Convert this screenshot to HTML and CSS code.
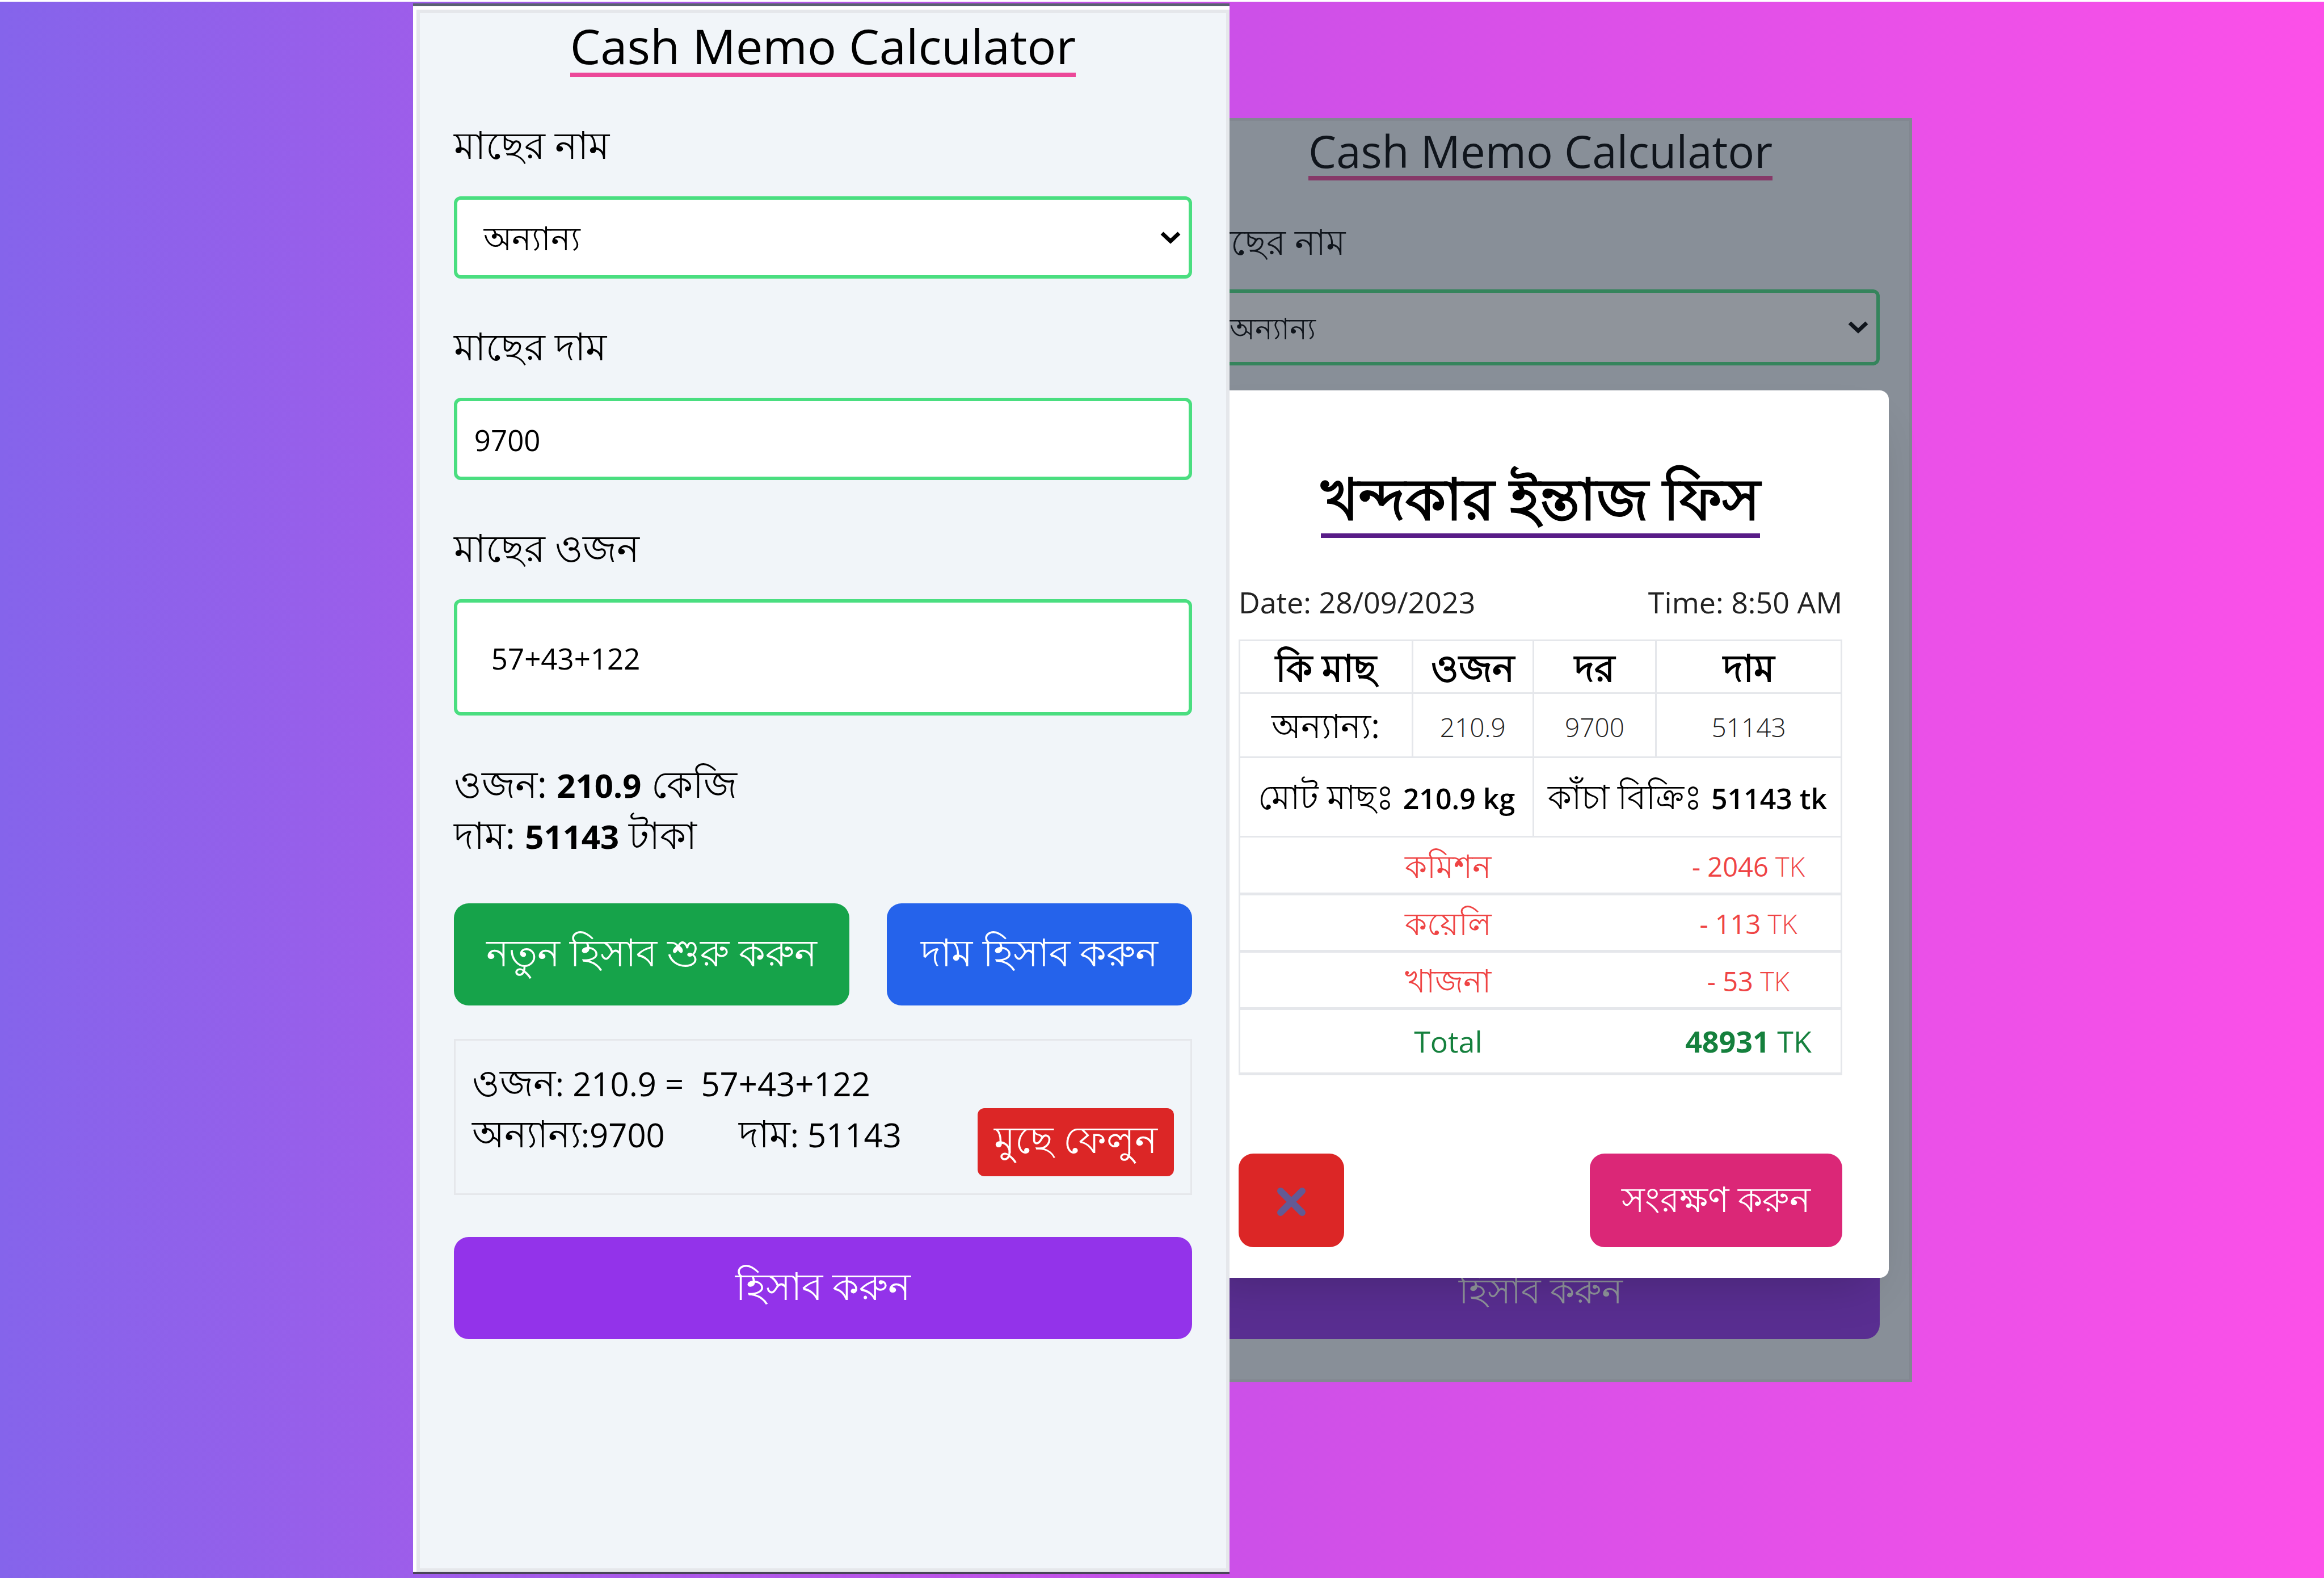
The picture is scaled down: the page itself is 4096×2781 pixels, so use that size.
FILE: index.html
```html
<!DOCTYPE html>
<html lang="bn">
<head>
  <meta charset="utf-8">
  <meta name="viewport" content="width=device-width, initial-scale=1">
  <title>Cash Memo Calculator</title>
  <link rel="stylesheet" href="styles.css">
</head>
<body>
  <main class="showcase">
    <section class="phone-front">
      <form class="memo">
        <h1 class="memo-title">Cash Memo Calculator</h1>

        <div class="field">
          <label for="fish">মাছের নাম</label>
          <div class="select-wrap">
            <select class="control" id="fish"><option>অন্যান্য</option></select>
            <svg class="chevron" viewBox="0 0 36 24" aria-hidden="true"><path d="M3 4l15 14L33 4"/></svg>
          </div>
        </div>

        <div class="field">
          <label for="price">মাছের দাম</label>
          <input class="control" id="price" type="text" value="9700">
        </div>

        <div class="field">
          <label for="weights">মাছের ওজন</label>
          <input class="control control-tall" id="weights" type="text" value="57+43+122">
        </div>

        <div class="summary">
          <p>ওজন: <strong>210.9</strong> কেজি</p>
          <p>দাম: <strong>51143</strong> টাকা</p>
        </div>

        <div class="actions">
          <button class="btn btn-green" type="button">নতুন হিসাব শুরু করুন</button>
          <button class="btn btn-blue" type="button">দাম হিসাব করুন</button>
        </div>

        <div class="entry">
          <div class="entry-text">
            <p>ওজন<span class="num">: 210.9 = &nbsp;57+43+122</span></p>
            <p class="entry-row"><span>অন্যান্য<span class="num">:9700</span></span><span>দাম<span class="num">: 51143</span></span></p>
          </div>
          <button class="btn btn-delete" type="button">মুছে ফেলুন</button>
        </div>

        <button class="btn btn-purple" type="button">হিসাব করুন</button>
      </form>
    </section>

    <section class="phone-back">
      <form class="memo-back">
        <h2 class="memo-title">Cash Memo Calculator</h2>
        <div class="field">
          <label for="fish-back">মাছের নাম</label>
          <div class="select-wrap">
            <select class="control" id="fish-back"><option>অন্যান্য</option></select>
            <svg class="chevron" viewBox="0 0 36 24" aria-hidden="true"><path d="M3 4l15 14L33 4"/></svg>
          </div>
        </div>
        <button class="btn btn-purple" type="button">হিসাব করুন</button>
      </form>

      <div class="overlay">
        <div class="modal" role="dialog" aria-labelledby="shop">
          <h2 class="shop" id="shop">খন্দকার ইন্তাজ ফিস</h2>
          <div class="stamp"><span>Date: 28/09/2023</span><span>Time: 8:50 AM</span></div>
          <table class="bill">
            <colgroup><col class="c-fish"><col class="c-weight"><col class="c-rate"><col class="c-price"></colgroup>
            <thead>
              <tr class="r-head"><th>কি মাছ</th><th>ওজন</th><th>দর</th><th>দাম</th></tr>
            </thead>
            <tbody>
              <tr class="r-item"><td>অন্যান্য:</td><td><span class="light">210.9</span></td><td><span class="light">9700</span></td><td><span class="light">51143</span></td></tr>
              <tr class="r-sum"><td colspan="2">মোট মাছঃ <b>210.9 kg</b></td><td colspan="2">কাঁচা বিক্রিঃ <b>51143 tk</b></td></tr>
              <tr class="r-cut"><td colspan="3">কমিশন</td><td><span class="amount">- 2046 <span class="unit">TK</span></span></td></tr>
              <tr class="r-cut"><td colspan="3">কয়েলি</td><td><span class="amount">- 113 <span class="unit">TK</span></span></td></tr>
              <tr class="r-cut"><td colspan="3">খাজনা</td><td><span class="amount">- 53 <span class="unit">TK</span></span></td></tr>
              <tr class="r-total"><td colspan="3">Total</td><td><b>48931</b> TK</td></tr>
            </tbody>
          </table>
          <div class="modal-actions">
            <button class="btn btn-close" type="button" aria-label="Close">
              <svg viewBox="0 0 50 50" aria-hidden="true"><path d="M6 6l38 38M44 6L6 44"/></svg>
            </button>
            <button class="btn btn-save" type="button">সংরক্ষণ করুন</button>
          </div>
        </div>
      </div>
    </section>
  </main>
</body>
</html>
```
FILE: styles.css
```css
* {
  box-sizing: border-box;
  margin: 0;
  padding: 0;
}

body {
  padding-top: 3px;
  background: #fff;
  color: #000;
  font-family: "Open Sans", "Noto Sans", sans-serif;
}

button,
input,
select {
  font-family: inherit;
  color: inherit;
}

.showcase {
  display: flex;
  min-height: calc(100vh - 3px);
  padding: 3px 0 7px 17.77%;
  background: linear-gradient(to right, #8564eb, #cc50e8 53%, #fc50e8);
}

/* Front phone */
.phone-front {
  position: relative;
  z-index: 2;
  flex: none;
  width: 42.73%;
  padding: 6px 0 0 6px;
  border-top: 5px solid #596270;
  border-bottom: 4px solid #4a4458;
  background: #fff;
}

.memo {
  display: flex;
  flex-direction: column;
  height: 100%;
  padding: 9px 60px;
  border: 6px solid #e5e7eb;
  background: #f1f5f9;
}

.memo-title {
  align-self: center;
  border-bottom: 8px solid #ec4899;
  font-size: 85px;
  line-height: 96px;
  font-weight: 400;
}

.field {
  display: flex;
  flex-direction: column;
  gap: 42px;
  margin-top: 68px;
}

.field label {
  font-size: 67px;
  line-height: 100px;
}

.select-wrap {
  position: relative;
}

.control {
  display: block;
  width: 100%;
  height: 145px;
  padding: 3px 30px 0;
  border: 6px solid #4ade80;
  border-radius: 12px;
  background: #fff;
  font-size: 51px;
}

select.control {
  padding: 0 46px;
  appearance: none;
  font-size: 58px;
}

.control-tall {
  height: 205px;
  padding: 3px 60px 0;
}

.chevron {
  position: absolute;
  top: 50%;
  right: 20px;
  width: 36px;
  height: 24px;
  margin-top: -12px;
  fill: none;
  stroke: #000;
  stroke-width: 7;
}

.summary {
  margin-top: 74px;
  font-size: 66px;
  line-height: 90px;
}

.summary strong {
  font-size: 58px;
  line-height: 1;
  font-weight: 700;
}

.actions {
  display: flex;
  justify-content: space-between;
  margin-top: 77px;
}

.btn {
  height: 180px;
  padding: 5px 57px 0;
  border: 0;
  border-radius: 26px;
  color: #fff;
  font-size: 67px;
}

.btn-green { background: #16a34a; }
.btn-purple { background: #9333ea; }

.btn-blue {
  padding-left: 60px;
  padding-right: 60px;
  background: #2563eb;
}

.entry {
  display: flex;
  justify-content: space-between;
  align-items: flex-end;
  margin-top: 59px;
  padding: 27px 29px 30px;
  border: 3px solid #e5e7eb;
}

.entry-text {
  padding-bottom: 32px;
  font-size: 66px;
  line-height: 90px;
}

.entry-row {
  display: flex;
  gap: 130px;
}

.num {
  font-size: 58px;
  line-height: 1;
}

.btn-delete {
  height: 120px;
  padding: 0 29px;
  border-radius: 12px;
  background: #dc2626;
}

.memo > .btn-purple {
  margin-top: 74px;
}

/* Back phone, dimmed behind the memo dialog */
.phone-back {
  position: relative;
  flex: none;
  width: 38.9%;
  margin: 202px 0 338px -3.18%;
}

.memo-back {
  display: flex;
  flex-direction: column;
  height: 100%;
  padding: 9px 52px 71px;
  border: 5px solid #e5e7eb;
  background: #f1f5f9;
}

.memo-back .memo-title {
  font-size: 78px;
  line-height: 88px;
}

.memo-back .field {
  gap: 39px;
  margin-top: 61px;
}

.memo-back label {
  font-size: 62px;
  line-height: 92px;
}

.memo-back .control {
  height: 134px;
  padding-left: 44px;
  font-size: 52px;
}

.memo-back .btn-purple {
  height: 166px;
  margin-top: auto;
  font-size: 62px;
}

.overlay {
  position: absolute;
  inset: 0;
  display: flex;
  align-items: flex-end;
  padding: 0 41px 184px;
  background: rgba(31, 41, 55, 0.5);
}

.modal {
  display: flex;
  flex-direction: column;
  width: 100%;
  padding: 125px 82px 54px;
  border-radius: 16px;
  background: #fff;
  box-shadow: 0 40px 80px -32px rgba(0, 0, 0, 0.2);
}

.shop {
  align-self: center;
  border-bottom: 8px solid #581c87;
  font-size: 102px;
  line-height: 127px;
  font-weight: 700;
}

.stamp {
  display: flex;
  justify-content: space-between;
  margin: 78px 0 31px;
  color: #222;
  font-size: 52px;
  line-height: 70px;
}

.bill {
  width: 100%;
  border-collapse: collapse;
  table-layout: fixed;
  text-align: center;
}

.c-fish { width: 28.7%; }
.c-weight { width: 20.1%; }
.c-rate { width: 20.4%; }
.c-price { width: 30.8%; }

.bill th,
.bill td {
  border: 3px solid #e5e7eb;
  font-size: 60px;
  line-height: 80px;
  white-space: nowrap;
}

.bill .r-head th {
  height: 93px;
  font-size: 66px;
  font-weight: 700;
}

.r-item { height: 113px; }
.r-sum { height: 140px; }
.r-cut { height: 101px; }
.r-total { height: 115px; }

.light {
  color: #222;
  font-size: 46px;
  font-weight: 300;
}

.r-sum b {
  font-size: 50px;
  font-weight: 600;
}

.bill .r-cut td {
  border-width: 0 3px 5px;
  color: #ef4444;
  font-size: 56px;
}

.bill .r-cut td:first-child,
.bill .r-total td:first-child {
  border-right: 0;
}

.bill .r-cut td:last-child,
.bill .r-total td:last-child {
  border-left: 0;
}

.amount {
  font-size: 47px;
}

.unit {
  font-weight: 300;
}

.bill .r-total td {
  border-bottom-width: 5px;
  color: #15803d;
  font-size: 52px;
}

.modal-actions {
  display: flex;
  justify-content: space-between;
  margin-top: 138px;
}

.modal-actions .btn {
  height: 165px;
  font-size: 62px;
}

.btn-close {
  display: grid;
  place-items: center;
  padding: 5px 68px 0;
  background: #dc2626;
}

.btn-close svg {
  width: 50px;
  height: 50px;
  fill: none;
  stroke: #635a94;
  stroke-width: 12;
  stroke-linecap: round;
}

.modal-actions .btn-save {
  padding: 5px 56px 0;
  background: #db2777;
}
```
